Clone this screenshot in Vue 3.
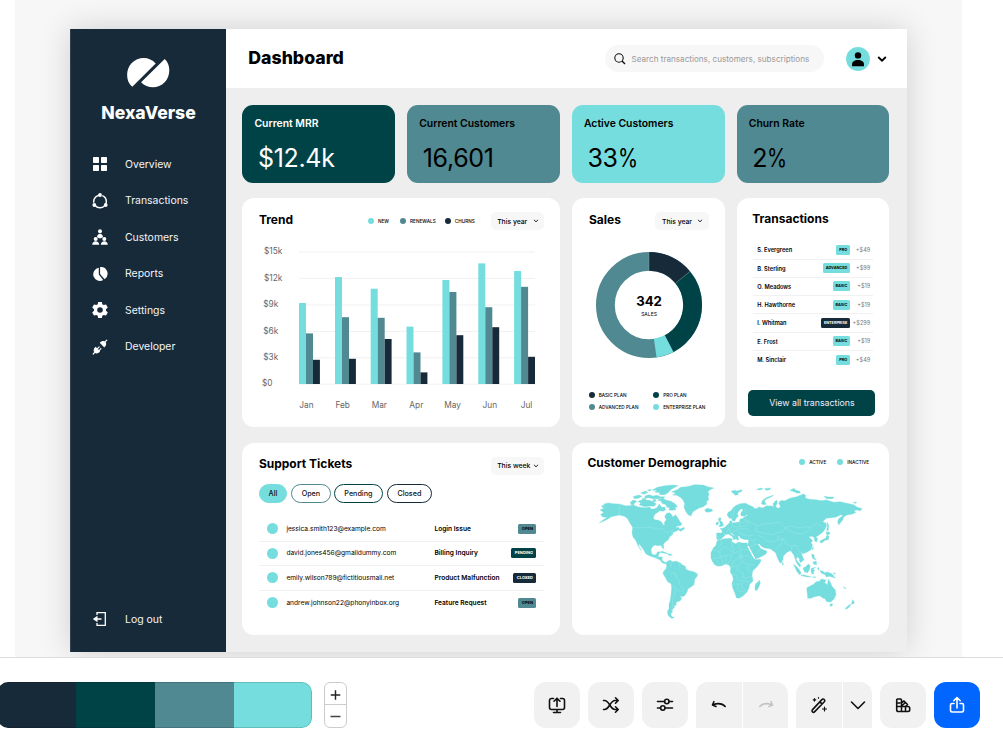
<script setup>
const nav = [
  { label: 'Overview', icon: 'grid' },
  { label: 'Transactions', icon: 'cycle' },
  { label: 'Customers', icon: 'people' },
  { label: 'Reports', icon: 'pie' },
  { label: 'Settings', icon: 'gear' },
  { label: 'Developer', icon: 'plug' },
]
const stats = [
  { label: 'Current MRR', value: '$12.4k', tone: 'green' },
  { label: 'Current Customers', value: '16,601', tone: 'teal' },
  { label: 'Active Customers', value: '33', unit: '%', tone: 'aqua' },
  { label: 'Churn Rate', value: '2', unit: '%', tone: 'teal' },
]
const ticks = [
  { t: '$15k', x: 264, y: 252 },
  { t: '$12k', x: 264, y: 278.4 },
  { t: '$9k', x: 263.2, y: 305 },
  { t: '$6k', x: 263.2, y: 331.4 },
  { t: '$3k', x: 263.2, y: 357.8 },
  { t: '$0', x: 262, y: 384.2 },
]
const months = [
  { m: 'Jan', x: 299, lx: 306.5, v: [303, 333.4, 359.8] },
  { m: 'Feb', x: 335, lx: 342.7, v: [277, 317.2, 358.8] },
  { m: 'Mar', x: 370.7, lx: 379.3, v: [288.7, 317.8, 339] },
  { m: 'Apr', x: 406.5, lx: 416.3, v: [326.6, 352.4, 372.4] },
  { m: 'May', x: 442.4, lx: 452.6, v: [280, 292, 335.2] },
  { m: 'Jun', x: 478.3, lx: 489.8, v: [263.4, 307.2, 327.2] },
  { m: 'Jul', x: 514.1, lx: 526.5, v: [271, 286.8, 356.8] },
]
const transactions = [
  { name: 'S. Evergreen', plan: 'PRO', amount: '+$49' },
  { name: 'B. Sterling', plan: 'ADVANCED', amount: '+$99' },
  { name: 'O. Meadows', plan: 'BASIC', amount: '+$19' },
  { name: 'H. Hawthorne', plan: 'BASIC', amount: '+$19' },
  { name: 'I. Whitman', plan: 'ENTERPRISE', amount: '+$299' },
  { name: 'E. Frost', plan: 'BASIC', amount: '+$19' },
  { name: 'M. Sinclair', plan: 'PRO', amount: '+$49' },
]
const tickets = [
  { mail: 'jessica.smith123@example.com', subject: 'Login Issue', state: 'OPEN' },
  { mail: 'david.jones456@gmaildummy.com', subject: 'Billing Inquiry', state: 'PENDING' },
  { mail: 'emily.wilson789@fictitiousmail.net', subject: 'Product Malfunction', state: 'CLOSED' },
  { mail: 'andrew.johnson22@phonyinbox.org', subject: 'Feature Request', state: 'OPEN' },
]
const land = [
  // North America
  'M90 212L103 206 95 203 97 198 104 199 101 194 115 191 130 193 148 194 165 199 178 199 190 197 205 203 225 205 238 203 245 209 258 208 264 200 268 194 275 204 284 203 287 212 279 216 269 214 262 220 255 224 250 235 254 241 266 243 275 248 279 256 284 258 283 249 289 241 284 232 290 222 299 220 305 226 309 233 317 226 324 237 330 247 336 253 333 258 322 260 316 266 326 264 329 270 342 264 343 269 332 276 326 272 318 276 310 279 307 286 299 292 295 301 285 309 280 315 282 329 277 325 273 318 262 319 255 317 247 322 243 332 245 343 252 347 259 345 262 338 270 337 266 347 264 352 277 353 276 363 284 369 290 368 287 373 277 371 270 362 258 356 240 350 228 344 221 331 212 320 205 311 208 324 216 334 210 329 203 316 197 303 189 293 186 280 188 264 180 252 173 238 163 231 148 227 135 230 124 232 114 239 102 245 88 251 100 241 112 234 98 233 92 226 101 219 95 215Z',
  // Arctic archipelago
  'M246 153L262 144 284 139 310 137 324 139 312 145 302 151 294 160 284 166 268 166 270 160 254 158 262 153Z',
  'M262 182L278 177 290 183 303 186 316 194 323 203 315 204 318 211 308 213 296 212 300 206 290 203 288 196 276 192 274 186Z',
  'M204 186L218 181 238 183 250 187 259 194 252 201 238 200 225 202 208 197 212 191Z',
  'M182 188L190 182 201 186 193 192 190 198 182 195Z',
  'M189 172L206 167 216 171 205 177 194 178Z', 'M212 161L226 155 234 159 222 165Z',
  'M232 152L244 150 240 156Z', 'M224 170L238 166 248 170 262 168 270 172 284 172 282 177 264 178 248 178 236 175 226 177Z',
  'M256 207L270 208 267 214 258 212Z', 'M216 178L228 176 227 181 218 182Z', 'M248 182L256 180 259 186 250 187Z',
  // Greenland and Iceland
  'M305 157L322 151 332 144 350 142 374 136 400 137 415 143 432 146 420 151 414 157 417 165 414 174 417 180 409 187 411 194 400 202 386 207 376 213 368 218 363 230 354 226 347 216 342 204 344 193 339 182 331 174 320 168 308 167 318 162Z',
  'M404 212L411 207 426 210 428 215 416 219 407 217Z',
  // Caribbean
  'M267 339L277 336 288 340 296 344 284 342Z', 'M293 345L303 344 307 348 296 348Z',
  // South America
  'M288 371L293 366 300 362 306 367 320 366 330 370 338 377 346 381 348 390 357 394 371 397 382 403 382 410 374 420 372 436 362 444 354 448 351 458 344 469 336 472 330 469 335 478 330 485 321 487 318 491 319 497 312 499 314 504 306 512 307 518 302 524 305 531 313 536 304 537 295 529 292 517 297 508 297 495 301 482 303 466 305 445 303 433 293 427 287 416 279 403 281 396 288 388 290 380Z',
  // Africa
  'M441 304L450 302 463 298 482 297 487 300 485 307 497 313 506 308 517 311 531 311 535 324 541 336 546 348 556 361 571 360 573 365 563 380 548 395 546 408 549 425 539 435 537 445 531 458 518 471 506 477 499 475 495 462 488 446 486 432 490 420 487 408 481 399 482 386 478 378 467 374 456 379 444 381 434 376 427 366 423 356 423 340 430 326 438 318Z',
  'M568 422L571 432 566 444 561 453 555 452 555 442 557 433 564 428Z',
  // Britain and Ireland
  'M447 235L454 237 451 243 457 249 461 258 452 262 446 261 451 255 449 247 445 242Z', 'M438 250L445 247 445 255 439 258Z',
  // Scandinavia
  'M471 227L475 218 483 215 489 205 499 198 511 193 527 192 538 198 552 204 548 211 536 211 531 209 529 218 531 226 523 231 513 229 512 222 519 212 514 208 507 214 502 223 505 231 498 237 495 245 487 244 485 237 478 237Z',
  // Eurasia
  'M440 299L440 281 456 281 456 273 450 268 463 265 471 257 478 252 480 244 486 246 486 251 500 249 508 248 510 240 519 237 523 233 532 229 528 217 530 208 541 211 552 207 560 208 566 203 578 206 590 199 605 200 611 202 609 193 615 186 621 183 622 190 617 202 625 207 632 202 626 192 631 184 645 184 659 177 680 172 700 164 707 168 706 176 718 180 738 181 754 184 769 182 792 189 810 187 831 192 851 196 862 204 877 208 871 214 860 212 852 214 857 220 845 225 833 226 822 232 818 242 806 257 803 248 806 238 819 229 813 226 799 233 784 235 769 237 758 247 766 250 770 257 766 268 758 279 744 289 738 292 743 299 740 308 734 305 733 296 727 291 716 292 721 297 728 304 723 310 728 318 723 331 710 339 700 343 694 342 698 352 702 361 692 370 688 365 689 359 681 352 679 361 685 369 692 377 690 384 682 374 677 364 672 348 667 341 662 334 652 338 640 350 639 361 633 372 628 368 621 352 618 342 609 334 600 328 583 326 574 321 567 316 573 326 582 331 591 336 588 344 576 351 556 360 551 353 543 339 533 320 535 311 536 301 528 301 518 299 511 296 508 290 503 291 507 301 501 302 494 290 486 281 480 281 495 292 499 297 492 302 486 291 475 284 466 286 462 291 454 299 446 302Z',
  // Arctic coast islands
  'M574 193L577 184 587 176 602 170 611 168 602 174 589 179 583 186 589 195 580 196Z',
  'M483 156L495 153 500 155 517 151 514 157 503 161 505 166 496 168 490 162Z',
  'M560 150L573 146 579 149 568 152Z', 'M583 148L602 146 599 151 588 153Z',
  'M660 153L672 147 676 152 689 156 691 161 680 161 672 157Z', 'M762 171L776 173 792 173 788 178 770 178Z', 'M850 188L860 189 858 192 852 191Z',
  // Japan, Sakhalin, Taiwan
  'M771 248L776 258 775 273 770 274 772 262Z', 'M768 279L776 277 781 282 776 286 769 285Z',
  'M771 287L777 291 775 301 765 303 759 309 751 311 750 305 760 300 767 297Z', 'M726 326L730 323 729 333Z',
  // South-East Asia
  'M637 369L641 374 637 378Z', 'M725 345L732 346 733 355 739 362 730 359 726 353Z', 'M731 367L739 366 740 376 732 375 728 370Z',
  'M699 386L707 382 715 374 721 379 718 391 713 400 703 397Z', 'M670 375L678 380 688 391 693 400 690 407 681 397 676 386Z',
  'M692 407L703 407 713 410 724 413 712 413 698 410Z', 'M724 387L737 384 729 390 735 394 730 397 732 403 726 404 723 396Z',
  'M727 413L737 412 735 415Z', 'M744 384L747 386 746 393 743 390Z',
  'M749 394L758 395 764 400 773 398 787 404 791 411 797 416 785 413 777 411 769 413 765 406 755 402Z', 'M790 400L797 402 793 405Z',
  // Oceania
  'M710 446L720 440 731 435 738 427 748 426 754 419 768 422 764 430 772 436 775 420 781 429 786 441 796 452 798 466 792 479 782 488 770 487 765 478 758 476 749 469 733 472 724 477 713 477 712 463Z',
  'M780 494L788 493 786 500 781 501Z', 'M848 481L853 488 852 493 844 494 846 487Z', 'M842 494L841 500 832 508 825 510 830 503Z', 'M819 442L828 447 825 448Z',
]
const borders = [
  'M148 193V228M188 265H250L262 270 278 268 290 280 310 270', 'M256 355L264 350M303 284L308 274',
  'M303 402L314 400 318 414 330 424 328 436 340 446 336 458M303 435L312 440 318 450 330 456M318 452L308 480 306 520M300 368L304 384M326 369L330 384',
  'M450 302L456 314 442 326M430 332L448 336 464 322M464 322L492 342 506 334M482 300L486 318 492 342M506 310L512 330 534 332M512 330L514 350 506 364',
  'M448 336L452 354 426 358M452 354L468 348 486 346M440 362L448 378M456 356L458 378M468 352L468 374M486 346L482 364 472 374M506 336L508 354 492 364 484 384',
  'M514 350L538 350 546 358M514 350L518 368 534 376 552 376M482 384L500 380 516 370M500 382L504 394 520 402 518 416 546 412M534 378L530 390 546 402M486 404L500 408 504 422 522 424',
  'M488 434L516 434 526 424 538 428M504 434L502 452 516 458 530 450M514 436L520 448',
  'M440 288L448 299M458 281L468 285M471 257L478 268 468 279M486 250L487 262 478 268 482 280M508 248L510 262 488 262M510 262L502 272 484 276M519 238L534 244 534 258 512 262M510 268L530 268 542 276M502 274L510 282 524 284M524 208L526 218M493 206L488 236M510 250L530 246M516 286L532 290 550 288M540 298L548 304 560 300',
  'M534 245L548 252 562 260 556 274 570 280M562 260L584 254 604 252 628 248 646 264 640 278M570 280L586 282 606 286 622 280 640 278M562 288L580 294 590 306 612 308 626 300 624 288M646 264L664 260 686 266 706 262 722 264 740 250 756 262',
  'M646 264L660 276 690 284 714 276 724 264M620 332L632 314 640 298 626 300M640 298L648 314 666 320 680 318 690 340M666 320L664 334M548 305L556 316 568 316M556 316L540 322M570 330L558 346M690 340L700 338M680 346L690 344',
]
</script>

<template>
  <div class="page">
    <div class="stage">
      <div class="window">
        <aside class="side">
          <svg class="logo" width="44" height="32" viewBox="126 57 44 32">
            <path fill="#fff" d="M132.3 86.8C125.8 81.5 125.3 70 131.5 63.3C138.4 56 149.5 56.200 155.700 63.400ZM164.700 59C170.800 64.300 170.900 75.500 164.700 82.200C157.900 89.400 147 88.500 141.100 82.200Z"/>
          </svg>
          <div class="brand">NexaVerse</div>
          <nav>
            <div v-for="n in nav" :key="n.label" class="item">
              <svg width="16" height="16" viewBox="0 0 16 16" fill="#fff">
                <g v-if="n.icon === 'grid'"><rect x="1" y="1" width="6" height="6" rx=".7"/><rect x="9" y="1" width="6" height="6" rx=".7"/><rect x="1" y="9" width="6" height="6" rx=".7"/><rect x="9" y="9" width="6" height="6" rx=".7"/></g>
                <g v-if="n.icon === 'cycle'"><circle cx="8" cy="8.500" r="6.300" fill="none" stroke="#fff" stroke-width="1.500" stroke-dasharray="10.400 2.800" stroke-dashoffset="-4.900"/><circle cx="8" cy="2" r="1.900"/><circle cx="2.300" cy="12" r="1.900"/><circle cx="13.700" cy="12" r="1.900"/></g>
                <g v-if="n.icon === 'people'"><circle cx="8" cy="2.200" r="2"/><path d="M5 8.300C5 3.600 11 3.600 11 8.300L8 9.500ZM.2 15.800C.2 11 7.200 11 7.200 15.800ZM8.800 15.800C8.800 11 15.800 11 15.800 15.800Z"/><circle cx="3.700" cy="10" r="2"/><circle cx="12.300" cy="10" r="2"/></g>
                <g v-if="n.icon === 'pie'"><path d="M6.800 1.800V8.600L11.200 14A6.600 6.600 0 1 1 6.800 1.800Z"/><path d="M8.100 1A6.700 6.700 0 0 1 12.600 13.200L8.100 8Z"/></g>
                <path v-if="n.icon === 'gear'" fill-rule="evenodd" d="M6.200 0H9.800L10.300 2.300L11.700 3.100L14 2.400L15.800 5.500L14 7.200V8.800L15.800 10.500L14 13.600L11.700 12.900L10.300 13.700L9.800 16H6.200L5.700 13.700L4.300 12.900L2 13.600L.2 10.500L2 8.800V7.200L.2 5.500L2 2.400L4.300 3.100L5.700 2.300ZM8 5.200A2.800 2.800 0 1 0 8 10.800A2.800 2.800 0 1 0 8 5.200Z"/>
                <g v-if="n.icon === 'plug'"><path d="M7.700 3.800C9.500 1.700 12 1.500 13.400 2.800C14.700 4.200 14.500 6.700 12.300 8.400ZM3.600 7.800L8.100 12.300C6.200 14.800 4 15 2.600 13.500C1.100 12.100 1.300 9.600 3.600 7.800Z"/><path d="M12.800 3.200L14.800 1.200M1.200 15L3.200 12.900M5.200 9.800L7.200 7.800M7 11.600L8.900 9.700" stroke="#fff" stroke-width="1.200" stroke-linecap="round"/></g>
              </svg>
              <span>{{ n.label }}</span>
            </div>
          </nav>
          <div class="item logout">
            <svg width="16" height="16" viewBox="0 0 16 16"><path d="M5 4V1.700H13.300V14.300H5V12" fill="none" stroke="#fff" stroke-width="1.300"/><path d="M.8 8L5.500 4.800V7.300H9.500V8.700H5.500V11.200Z" fill="#fff"/></svg>
            <span>Log out</span>
          </div>
        </aside>

        <div class="main">
          <header>
            <h1>Dashboard</h1>
            <div class="search">
              <svg width="12" height="12" viewBox="0 0 12 12" fill="none" stroke="#111"><circle cx="5" cy="5" r="4.200" stroke-width="1.100"/><path d="M8 8L11 11" stroke-width="1.400"/></svg>
              <span>Search transactions, customers, subscriptions</span>
            </div>
            <svg class="avatar" width="24" height="24" viewBox="0 0 24 24"><circle cx="12" cy="12" r="11.900" fill="#75dddd"/><circle cx="12" cy="8.400" r="3.200"/><path d="M6 19.200V17.500C6 14.500 8.500 13 12 13S18 14.500 18 17.500V19.200Z"/></svg>
            <svg class="chev" width="10" height="8" viewBox="0 0 10 8"><path d="M1.200 2L5 5.700L8.800 2" fill="none" stroke="#000" stroke-width="1.800"/></svg>
          </header>

          <div class="content">
            <section v-for="s in stats" :key="s.label" class="stat" :class="s.tone">
              <div class="stat-label">{{ s.label }}</div>
              <div class="stat-value">{{ s.value }}<span v-if="s.unit" class="unit">{{ s.unit }}</span></div>
            </section>

            <section class="card trend">
              <div class="head">
                <h2>Trend</h2>
                <div class="legend trend-legend">
                  <span><i class="aqua"></i>NEW</span><span><i class="teal"></i>RENEWALS</span><span><i class="navy"></i>CHURNS</span>
                </div>
                <div class="select">This year<svg width="6" height="4" viewBox="0 0 6 4"><path d="M.9 .8L3 2.800L5.100 .8" fill="none" stroke="#111" stroke-width=".9"/></svg></div>
              </div>
              <svg class="chart" width="290" height="180" viewBox="256 237 290 180">
                <g v-for="t in ticks" :key="t.t">
                  <rect x="299" :y="t.y - .5" width="236" height="1" fill="#f1f1f1"/>
                  <text :x="t.x" :y="t.y + 2.200" class="axis">{{ t.t }}</text>
                </g>
                <g v-for="m in months" :key="m.m">
                  <rect :x="m.x" :y="m.v[0]" width="7" :height="384 - m.v[0]" fill="#75dddd"/>
                  <rect :x="m.x + 7" :y="m.v[1]" width="7" :height="384 - m.v[1]" fill="#508991"/>
                  <rect :x="m.x + 14" :y="m.v[2]" width="6.900" :height="384 - m.v[2]" fill="#172a3a"/>
                  <text :x="m.lx" y="408.400" class="axis" text-anchor="middle">{{ m.m }}</text>
                </g>
              </svg>
            </section>

            <section class="card sales">
              <div class="head">
                <h2>Sales</h2>
                <div class="select">This year<svg width="6" height="4" viewBox="0 0 6 4"><path d="M.9 .8L3 2.800L5.100 .8" fill="none" stroke="#111" stroke-width=".9"/></svg></div>
              </div>
              <svg class="donut" width="108" height="108" viewBox="-54 -54 108 108">
                <g transform="rotate(-90)" fill="none" stroke-width="18.800">
                  <circle r="43.600" pathLength="360" stroke="#508991"/>
                  <circle r="43.600" pathLength="360" stroke="#172a3a" stroke-dasharray="50.500 309.500"/>
                  <circle r="43.600" pathLength="360" stroke="#004346" stroke-dasharray="102 258" stroke-dashoffset="-50.500"/>
                  <circle r="43.600" pathLength="360" stroke="#75dddd" stroke-dasharray="19.200 340.800" stroke-dashoffset="-152.500"/>
                </g>
                <path d="M0 -53V-34.200M26.600 -21.800L41 -33.500" stroke="#8fa9ae" stroke-width=".4"/>
                <text x="0" y="0.500" text-anchor="middle" class="total">342</text>
                <text x="0" y="10.800" text-anchor="middle" class="total-label">SALES</text>
              </svg>
              <div class="legend plans">
                <span><i class="navy"></i>BASIC PLAN</span><span><i class="green"></i>PRO PLAN</span>
                <span><i class="teal"></i>ADVANCED PLAN</span><span><i class="aqua"></i>ENTERPRISE PLAN</span>
              </div>
            </section>

            <section class="card trans">
              <h2>Transactions</h2>
              <div class="rows">
                <div v-for="t in transactions" :key="t.name" class="trow">
                  <b>{{ t.name }}</b>
                  <em class="badge" :class="t.plan === 'ENTERPRISE' ? 'navy' : 'aqua'">{{ t.plan }}</em>
                  <small>{{ t.amount }}</small>
                </div>
              </div>
              <div class="button">View all transactions</div>
            </section>

            <section class="card support">
              <div class="head">
                <h2>Support Tickets</h2>
                <div class="select">This week<svg width="6" height="4" viewBox="0 0 6 4"><path d="M.9 .8L3 2.800L5.100 .8" fill="none" stroke="#111" stroke-width=".9"/></svg></div>
              </div>
              <div class="pills"><span class="p-all">All</span><span class="p-open">Open</span><span class="p-pending">Pending</span><span class="p-closed">Closed</span></div>
              <div class="tickets">
                <div v-for="t in tickets" :key="t.mail" class="ticket">
                  <i></i><span>{{ t.mail }}</span><b>{{ t.subject }}</b>
                  <em class="badge" :class="{ OPEN: 'teal', PENDING: 'green', CLOSED: 'navy' }[t.state]">{{ t.state }}</em>
                </div>
              </div>
            </section>

            <section class="card demo">
              <div class="head">
                <h2>Customer Demographic</h2>
                <div class="legend demo-legend"><span><i class="aqua"></i>ACTIVE</span><span><i class="aqua"></i>INACTIVE</span></div>
              </div>
              <svg class="map" width="268" height="138" viewBox="78 128 804 414">
                <path v-for="(d, i) in land" :key="i" :d="d" fill="#75dddd" stroke="#75dddd" stroke-width="1"/>
                <path v-for="(d, i) in borders" :key="'b' + i" :d="d" fill="none" stroke="#a4eaea" stroke-width="1.200" stroke-linejoin="round"/>
                <path d="M534 320L541 334 554 358M566 314L574 326 584 330" fill="none" stroke="#fff" stroke-width="4"/>
              </svg>
            </section>
          </div>
        </div>
      </div>
    </div>

    <footer>
      <div class="palette"><i class="navy"></i><i class="green"></i><i class="teal"></i><i class="aqua"></i></div>
      <div class="stepper">
        <svg width="21" height="22" viewBox="0 0 21 22"><path d="M5.500 12.500H15.500M10.500 7.500V17.500" stroke="#222" stroke-width="1.500"/></svg>
        <svg width="21" height="21" viewBox="0 0 21 21"><path d="M5.500 11.500H15.500" stroke="#444" stroke-width="1.500"/></svg>
      </div>
      <div class="tools">
        <div class="tool"><svg width="20" height="20" viewBox="0 0 20 20"><path d="M6.500 3.500H4.500A2 2 0 0 0 2.500 5.500V12.500A2 2 0 0 0 4.500 14.500H15.500A2 2 0 0 0 17.500 12.500V5.500A2 2 0 0 0 15.500 3.500H13.500M10 11.500V3.500M7 6.200L10 3.200L13 6.200M10 14.500V17.500M6.500 17.500H13.500"/></svg></div>
        <div class="tool"><svg width="20" height="20" viewBox="0 0 20 20"><path d="M2.500 5.500H3.500C8.500 5.500 9 14.500 14 14.500H17M2.500 14.500H3.500C8.500 14.500 9 5.500 14 5.500H17M14.500 2.800L17.200 5.500L14.500 8.200M14.500 11.800L17.200 14.500L14.500 17.200"/></svg></div>
        <div class="tool"><svg width="20" height="20" viewBox="0 0 20 20"><path d="M2.500 6.500H9.500M14 6.500H17.500M2.500 13H5.500M10 13H17.500"/><circle cx="11.800" cy="6.500" r="2.200"/><circle cx="7.800" cy="13" r="2.200"/></svg></div>
        <div class="pair">
          <div class="tool"><svg width="20" height="20" viewBox="0 0 20 20"><path d="M16.200 11.500C13.500 8.500 8.500 8 3.900 9.800M4.900 6.700L3.500 10L7 11.500"/></svg></div>
          <div class="tool w45 dim"><svg width="20" height="20" viewBox="0 0 20 20"><path d="M3.800 11.500C6.500 8.500 11.500 8 16.100 9.800M15.100 6.700L16.500 10L13 11.500"/></svg></div>
        </div>
        <div class="pair">
          <div class="tool"><svg width="20" height="20" viewBox="0 0 20 20"><path d="M3.300 14.900L12.900 4.600A1.500 1.500 0 0 1 15.300 6.800L5.500 16.900A1.500 1.500 0 0 1 3.300 14.900ZM10.800 6.800L13 8.900"/><path stroke-width="1.200" d="M5.500 3.500V6.100M4.200 4.800H6.800M15.500 12V16M13.500 14H17.500M9.500 2.500V3.200"/></svg></div>
          <div class="tool w29"><svg width="20" height="20" viewBox="0 0 20 20"><path d="M3.500 7L10 13.500L16.500 7"/></svg></div>
        </div>
        <div class="tool"><svg width="20" height="20" viewBox="0 0 20 20"><path d="M3.700 13.500V5A1 1 0 0 1 4.700 4H7.500A1 1 0 0 1 8.500 5V11M8.500 7.800L11 6L14.500 9.500L12.500 11.500M8.500 11L12.500 7.500M3.700 11.500H15A1.700 1.700 0 0 1 16.700 13.200V14.800A1.700 1.700 0 0 1 15 16.500H5.500A1.800 1.800 0 0 1 3.700 14.700ZM8.500 11.500V16.500M12.500 11.500V16.500M3.700 8H7"/></svg></div>
        <div class="tool blue"><svg width="20" height="20" viewBox="0 0 20 20"><path d="M7 8.500H5A1.500 1.500 0 0 0 3.500 10V15.500A1.500 1.500 0 0 0 5 17H15A1.500 1.500 0 0 0 16.500 15.500V10A1.500 1.500 0 0 0 15 8.500H13M10 13V3M6.800 5.700L10 2.500L13.200 5.700"/></svg></div>
      </div>
    </footer>
  </div>
</template>

<style>
body { background: #fff; }
</style>

<style scoped>
* { box-sizing: border-box; }
.page { width: 1003px; height: 739px; overflow: hidden; font-family: Inter, "Liberation Sans", sans-serif; color: #000; }
h1, h2 { margin: 0; font-weight: 700; }
i, em { font-style: normal; }
svg { display: block; flex: none; }
.navy { background: #172a3a; color: #fff; }
.green { background: #004346; color: #fff; }
.teal { background: #508991; }
.aqua { background: #75dddd; }
.stage { height: 657px; width: 947px; margin-left: 15px; padding: 29px 0 0 55px; background: #f7f7f7; overflow: hidden; }
.window { width: 837px; height: 623px; display: flex; box-shadow: 0 0 30px rgba(0, 0, 0, .16); }
.side { width: 156px; background: #172a3a; color: #fff; display: flex; flex-direction: column; border-left: 1px solid #34424f; }
.logo { margin: 28px 0 0 55px; }
.brand { font-weight: 800; font-size: 17.600px; line-height: 22px; margin-top: 12.500px; text-align: center; }
nav { margin-top: 22.300px; }
.item { height: 36.550px; display: flex; align-items: center; gap: 17.500px; padding-left: 20.500px; font-size: 10.450px; color: #f2f4f5; }
.logout { margin-top: auto; margin-bottom: 14.700px; }
.main { flex: 1; background: #eee; display: flex; flex-direction: column; }
header { height: 59px; background: #fff; display: flex; align-items: center; padding-left: 22.300px; }
h1 { font-size: 17.700px; font-weight: 800; line-height: 22px; width: 356.700px; margin-top: -1.500px; }
.search { width: 219px; height: 27px; border-radius: 14px; background: #f7f7f7; display: flex; align-items: center; gap: 5.500px; padding-left: 9px; font-size: 8.150px; color: #999; }
.avatar { margin-left: 22px; }
.chev { margin-left: 7px; }
.content { display: grid; grid-template-columns: repeat(4, 152.700px); grid-template-rows: 78px 229px 192.500px; column-gap: 12.100px; row-gap: 15.300px; padding: 17.200px 0 0 16.400px; }
.stat { border-radius: 11px; padding: 11.800px 12px 0; }
.stat-label { font-size: 10.400px; line-height: 13px; font-weight: 600; }
.stat-value { font-size: 25px; line-height: 30px; margin: 13.400px 0 0 3.500px; letter-spacing: -.3px; }
.unit { display: inline-block; transform: scaleX(.82); transform-origin: left; }
.card { background: #fff; border-radius: 12px; }
.trend, .support, .demo { grid-column: span 2; }
.head { display: flex; position: relative; }
h2 { font-size: 12px; line-height: 15px; }
.trend .head { padding: 14px 0 0 16.500px; height: 38.500px; }
.trend h2, .sales h2 { margin-top: -.6px; }
.support .head { padding: 14.300px 0 0 16.500px; height: 41px; }
.support h2 { margin-top: -1.300px; }
.sales .head { padding: 14px 0 0 17px; height: 40.500px; }
.select { margin-left: auto; margin-right: 15.700px; width: 53.500px; height: 17.500px; border-radius: 5px; background: #f7f7f7; font-size: 6.800px; font-weight: 500; display: flex; align-items: center; justify-content: space-between; padding: 0 5.500px 0 6.500px; }
.legend { font-size: 4.700px; font-weight: 500; line-height: 6px; }
.legend span { display: flex; align-items: center; white-space: nowrap; }
.legend i { width: 6px; height: 6px; border-radius: 50%; margin-right: 4px; }
.trend-legend { display: flex; gap: 11px; margin: 5.500px 0 0 75px; height: 6px; }
.trend-legend span:last-child { margin-left: -2px; }
.chart { margin-left: 13.500px; }
.axis { font-size: 8.300px; fill: #666; }
.donut { margin: 12.500px 0 0 22.600px; }
.total { font-size: 13.200px; font-weight: 700; }
.total-label { font-size: 5px; }
.plans { display: grid; grid-template-columns: 64.500px auto; row-gap: 6.200px; margin: 32.500px 0 0 16.700px; }
.trans h2 { padding: 13px 0 0 15.500px; }
.rows { margin: 14.800px 16.500px 0; }
.trow { height: 18.250px; display: flex; align-items: center; padding: 0 2.700px 0 4px; border-bottom: 1px solid #f1f1f1; font-size: 5.700px; }
.trow:last-child, .ticket:last-child { border-bottom: 0; }
.trow b { font-weight: 600; flex: 1; }
.trow small { width: 20px; text-align: right; font-size: 5.600px; color: #777; }
.badge { height: 10px; line-height: 10px; border-radius: 1.500px; padding: 0 3px; font-size: 3.800px; font-weight: 700; }
.ticket .badge { padding: 0 3.400px; font-size: 4px; }
.button { margin: 20.700px 0 0 11.700px; width: 127px; height: 26.500px; border-radius: 5px; background: #004346; color: #eef; font-size: 8.800px; line-height: 26.500px; text-align: center; }
.pills { display: flex; margin-left: 16.500px; font-size: 7.200px; font-weight: 500; }
.pills span { height: 19.300px; border-radius: 10px; border: 1.500px solid; display: flex; align-items: center; justify-content: center; color: #111; }
.pills .p-all { width: 28px; background: #75dddd; border-color: #75dddd; margin-right: 4px; }
.pills .p-open { width: 40px; border-color: #508991; margin-right: 3px; }
.pills .p-pending { width: 49px; border-color: #004346; margin-right: 4px; }
.pills .p-closed { width: 45px; border-color: #172a3a; }
.tickets { margin: 14px 15.500px 0 16.500px; }
.ticket { height: 24.550px; display: flex; align-items: center; border-bottom: 1px solid #f0f0f0; font-size: 6.640px; padding: 0 8px; }
.ticket i { width: 11px; height: 11px; border-radius: 50%; background: #75dddd; margin-right: 8.500px; }
.ticket span { width: 148px; }
.ticket b { font-weight: 600; flex: 1; }
.demo .head { padding: 12.600px 0 0 15.500px; height: 28px; }
.demo-legend { display: flex; gap: 11px; margin: 4px 20.300px 0 auto; height: 6px; }
.map { margin: 11.500px 0 0 24.300px; }
footer { height: 82px; border-top: 1px solid #ddd; background: #fff; display: flex; padding-top: 24px; }
.palette { display: flex; width: 314px; height: 46px; margin-left: -2px; border-radius: 10px; overflow: hidden; position: relative; }
.palette::after { content: ""; position: absolute; inset: 0; border: 1px solid rgba(0, 0, 0, .15); border-radius: 10px; }
.palette i { width: 79px; flex: none; }
.palette i:first-child { width: 78px; }
.stepper { margin-left: 12px; width: 23px; height: 46px; border: 1px solid #ccc; border-radius: 6px; }
.stepper svg:first-child { border-bottom: 1px solid #ccc; }
.tools { display: flex; gap: 8px; margin-left: 187px; }
.tool { width: 46px; height: 46px; border-radius: 12px; background: #f1f1f1; display: flex; align-items: center; justify-content: center; }
.tool svg { fill: none; stroke: #111; stroke-width: 1.600; stroke-linecap: round; stroke-linejoin: round; }
.pair { display: flex; gap: 1px; border-radius: 12px; overflow: hidden; }
.pair .tool { border-radius: 0; }
.pair .w45 { width: 45px; }
.pair .w29 { width: 29px; }
.dim svg { stroke: #c4c4c4; }
.blue { background: #06f; }
.blue svg { stroke: #fff; }
</style>
